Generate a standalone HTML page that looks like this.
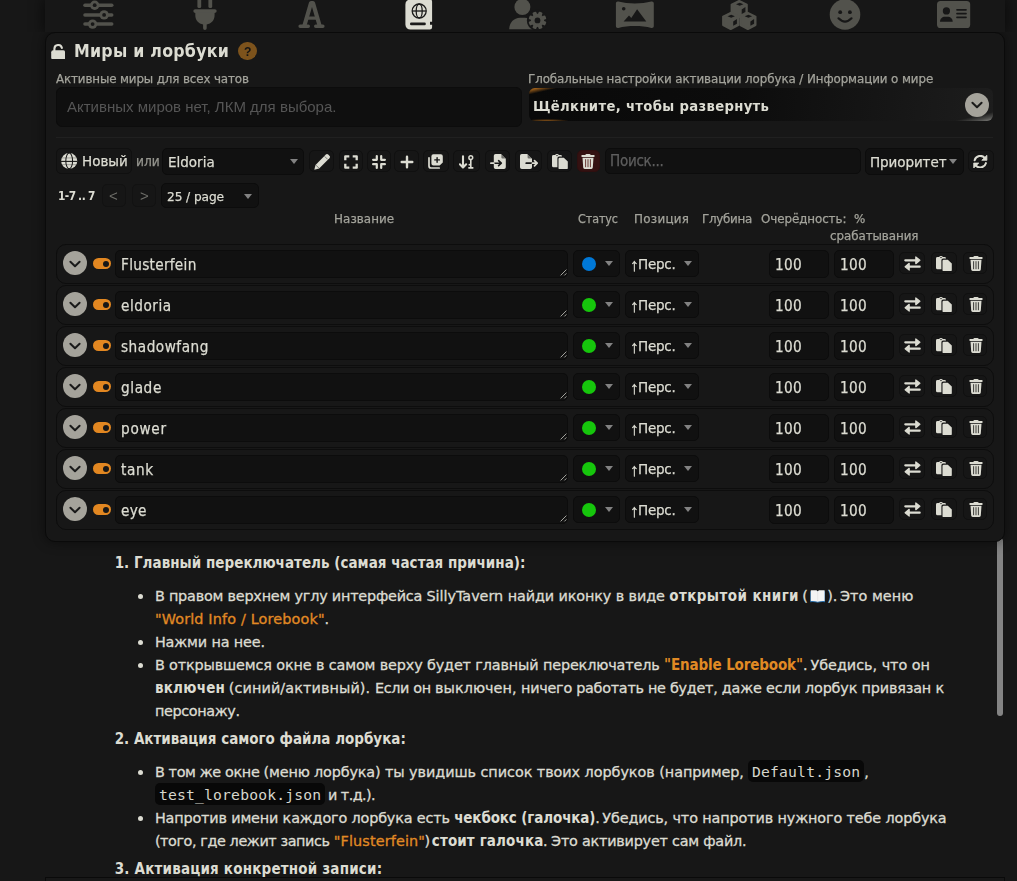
<!DOCTYPE html>
<html lang="ru">
<head>
<meta charset="utf-8">
<title>SillyTavern</title>
<style>
*{box-sizing:border-box;margin:0;padding:0}
html,body{width:1017px;height:881px;overflow:hidden;background:#171717}
body{position:relative;font-family:"DejaVu Sans","Liberation Sans",sans-serif;font-size:13.5px;color:#dcdcd2}
.abs{position:absolute}
#topbar{left:45px;top:0;width:960px;height:32px;background:#171717;box-shadow:0 0 14px 2px rgba(0,0,0,.55);clip-path:inset(-30px -30px 0 -30px)}
#panel{left:45px;top:32px;width:960px;height:510px;background:#171717;border:1px solid #0a0a0a;border-radius:10px;box-shadow:0 0 12px 1px rgba(0,0,0,.42);clip-path:inset(0 -30px -30px -30px)}
#chat{left:45px;top:542px;width:960px;height:335px;background:#171717}
#form{left:45px;top:877px;width:960px;height:10px;background:#181818;border:1px solid #0a0a0a}
.t{position:absolute;white-space:pre;line-height:20px;will-change:transform;-webkit-text-stroke:.25px currentColor}
.t.b{font-weight:700;-webkit-text-stroke:0}
.box{position:absolute;background:#111;border:1px solid #0c0c0c;border-radius:5px}
.btn{position:absolute;background:#161616;border:1px solid #101010;border-radius:5px}
.arrow{position:absolute;width:0;height:0;border-left:4px solid transparent;border-right:4px solid transparent;border-top:5px solid #828282}
.lbl{color:#a3a39b}
.row{position:absolute;left:56px;width:938px;height:40px;border:1px solid #0d0d0d;border-radius:10px;background:#171717}
.circ{position:absolute;width:24px;height:24px;border-radius:50%;background:#a5a39b}
.tog{position:absolute;width:18px;height:11px;border-radius:6px;background:#e28721}
.tog i{position:absolute;right:2px;top:2.5px;width:6px;height:6px;border-radius:50%;background:#171717}
.dot{position:absolute;width:14px;height:14px;border-radius:50%}
.chat{position:absolute;white-space:pre;line-height:23px;font-size:14.4px;color:#dcdcd2;-webkit-text-stroke:.3px currentColor}
.chat.b{font-family:"DejaVu Sans Condensed","DejaVu Sans",sans-serif;font-weight:700;font-size:15px;-webkit-text-stroke:0}
.chat.code{font-family:"DejaVu Sans Mono","Liberation Mono",monospace;font-size:14.7px;-webkit-text-stroke:0;color:#d6d6cc}
.chat.q{color:#e18a24}
.ln{position:static;height:0}
.bul{position:absolute;width:5.6px;height:5.6px;border-radius:50%;background:#dcdcd2}
#sb{left:996.5px;top:538px;width:6px;height:177.800px;background:#848484;border-radius:3px}
</style>
</head>
<body>
<div id="chat" class="abs"></div>
<div id="sb" class="abs"></div>
<div id="panel" class="abs"></div>
<div id="topbar" class="abs"></div>
<div id="form" class="abs"></div>
<div class="t b" id="s0" style="left:74.40px;top:41.35px;font-size:17.6px;letter-spacing:0.245px;font-family:'DejaVu Sans Condensed','DejaVu Sans',sans-serif;">Миры и лорбуки</div>
<div class="abs" style="left:237.9px;top:41.7px;width:18.9px;height:18.7px;border-radius:50%;background:#7d531c"></div>
<div class="t" id="s1" style="left:243.80px;top:42.35px;font-size:12.2px;letter-spacing:0.000px;color:#141414;font-family:'Liberation Sans',sans-serif;font-weight:700;-webkit-text-stroke:0;">?</div>
<div class="t lbl" id="s2" style="left:55.50px;top:69.35px;font-size:11.9px;letter-spacing:-0.137px;">Активные миры для всех чатов</div>
<div class="t lbl" id="s3" style="left:527.50px;top:69.35px;font-size:11.9px;letter-spacing:-0.098px;">Глобальные настройки активации лорбука / Информации о мире</div>
<div class="box" style="left:56px;top:87.3px;width:466px;height:39.3px;border-radius:6px;background:#0f0f0f"></div>
<div class="t" id="s4" style="left:66.80px;top:96.85px;font-size:15px;letter-spacing:0.000px;color:#555;font-family:'Liberation Sans',sans-serif;-webkit-text-stroke:0;">Активных миров нет, ЛКМ для выбора.</div>
<div class="abs" id="drawer" style="left:528.6px;top:87.8px;width:464.4px;height:33px;border-radius:6px;background:linear-gradient(167deg,rgba(226,135,33,.95) 0%,rgba(226,135,33,.55) 2%,rgba(226,135,33,0) 4.800%),linear-gradient(167deg,rgba(160,160,155,0) 93.5%,rgba(160,160,155,.35) 97%,rgba(165,165,160,.75) 100%),radial-gradient(ellipse 22px 2.2px at 18px 100%,rgba(226,135,33,.6),transparent 100%),linear-gradient(97deg,#090909 0%,#0c0c0c 45%,#1d1d1d 100%)"></div>
<div class="t b" id="s5" style="left:532.80px;top:95.85px;font-size:14.7px;letter-spacing:0.318px;font-family:'DejaVu Sans Condensed','DejaVu Sans',sans-serif;">Щёлкните, чтобы развернуть</div>
<div class="circ" style="left:965px;top:93px"></div>
<div class="abs" style="left:56px;top:136.5px;width:937px;height:1px;background:#202020"></div>
<div class="btn" style="left:56.4px;top:148.2px;width:76px;height:25.4px"></div>
<div class="t" id="s6" style="left:82.10px;top:151.35px;font-size:13.5px;letter-spacing:-0.003px;">Новый</div>
<div class="t" id="s7" style="left:136.40px;top:151.35px;font-size:13.6px;letter-spacing:-0.009px;color:#96968f;font-family:'DejaVu Sans Condensed','DejaVu Sans',sans-serif;">или</div>
<div class="box" style="left:162.2px;top:148.1px;width:142.3px;height:26.7px"></div>
<div class="t" id="s8" style="left:168.40px;top:152.35px;font-size:13.5px;letter-spacing:0.002px;">Eldoria</div>
<div class="arrow" style="left:290px;top:159px"></div>
<div class="btn" style="left:308.7px;top:150.3px;width:25.6px;height:22px"></div>
<div class="btn" style="left:338.5px;top:150.3px;width:24px;height:22px"></div>
<div class="btn" style="left:366.9px;top:150.3px;width:23.8px;height:22px"></div>
<div class="btn" style="left:394.4px;top:150.3px;width:24.2px;height:22px"></div>
<div class="btn" style="left:422.5px;top:150.3px;width:26px;height:22px"></div>
<div class="btn" style="left:452.7px;top:150.3px;width:27.6px;height:22px"></div>
<div class="btn" style="left:484.6px;top:150.3px;width:25.8px;height:22px"></div>
<div class="btn" style="left:514.7px;top:150.3px;width:27.6px;height:22px"></div>
<div class="btn" style="left:546.7px;top:150.3px;width:25.7px;height:22px"></div>
<div class="btn" style="left:576.5px;top:150.3px;width:23.8px;height:22px;background:#341111;border-color:#2e0f0f"></div>
<div class="box" style="left:604.5px;top:148px;width:256px;height:25.5px"></div>
<div class="t" id="s9" style="left:610.30px;top:151.35px;font-size:15px;letter-spacing:-0.244px;color:#5f5f5f;font-family:'DejaVu Sans Condensed','DejaVu Sans',sans-serif;">Поиск...</div>
<div class="box" style="left:864.5px;top:148px;width:99.5px;height:26.5px"></div>
<div class="t" id="s10" style="left:870.40px;top:152.35px;font-size:13.5px;letter-spacing:-0.080px;">Приоритет</div>
<div class="arrow" style="left:949.3px;top:159.3px"></div>
<div class="btn" style="left:967.6px;top:150.3px;width:26px;height:22px"></div>
<div class="ln"><span class="t b" id="s11" style="left:57.90px;top:186.35px;font-size:11.8px;letter-spacing:-0.544px;font-family:'DejaVu Sans Condensed','DejaVu Sans',sans-serif;">1-7</span> <span class="t b" id="s12" style="left:78.20px;top:186.35px;font-size:11.8px;letter-spacing:-0.278px;font-family:'DejaVu Sans Condensed','DejaVu Sans',sans-serif;">..</span> <span class="t b" id="s13" style="left:88.20px;top:186.35px;font-size:11.8px;letter-spacing:0.000px;font-family:'DejaVu Sans Condensed','DejaVu Sans',sans-serif;">7</span></div>
<div class="btn" style="left:101.5px;top:184.3px;width:24.9px;height:23px;border-color:#121212"></div>
<div class="t" id="s14" style="left:109.40px;top:185.85px;font-size:15px;letter-spacing:0.000px;color:#6e6e69;font-family:'Liberation Sans',sans-serif;-webkit-text-stroke:0;">&lt;</div>
<div class="btn" style="left:132.3px;top:184.3px;width:24.2px;height:23px;border-color:#121212"></div>
<div class="t" id="s15" style="left:139.90px;top:185.85px;font-size:15px;letter-spacing:0.000px;color:#6e6e69;font-family:'Liberation Sans',sans-serif;-webkit-text-stroke:0;">&gt;</div>
<div class="box" style="left:161.2px;top:183px;width:97.8px;height:25.4px"></div>
<div class="t" id="s16" style="left:167.00px;top:187.35px;font-size:12.2px;letter-spacing:-0.089px;">25 / page</div>
<div class="arrow" style="left:243.8px;top:193.5px"></div>
<div class="t lbl" id="s17" style="left:333.50px;top:209.35px;font-size:11.9px;letter-spacing:0.075px;">Название</div>
<div class="t lbl" id="s18" style="left:577.50px;top:208.85px;font-size:12.4px;letter-spacing:-0.066px;font-family:'DejaVu Sans Condensed','DejaVu Sans',sans-serif;">Статус</div>
<div class="t lbl" id="s19" style="left:633.50px;top:209.35px;font-size:11.9px;letter-spacing:0.292px;">Позиция</div>
<div class="t lbl" id="s20" style="left:702.20px;top:209.35px;font-size:11.9px;letter-spacing:-0.303px;">Глубина</div>
<div class="t lbl" id="s21" style="left:761.20px;top:209.35px;font-size:11.9px;letter-spacing:-0.083px;">Очерёдность:</div>
<div class="t lbl" id="s22" style="left:854.20px;top:209.35px;font-size:11.9px;letter-spacing:0.000px;">%</div>
<div class="t lbl" id="s23" style="left:830.20px;top:226.35px;font-size:11.9px;letter-spacing:-0.070px;">срабатывания</div>
<div class="row" style="top:244px"></div>
<div class="circ" style="left:63.4px;top:251.4px"></div>
<div class="tog" style="left:93px;top:258px"><i></i></div>
<div class="box" style="left:115px;top:250px;width:452.7px;height:27.5px"></div>
<div class="t" id="s24" style="left:120.90px;top:255.35px;font-size:15.2px;letter-spacing:0.280px;font-family:'DejaVu Sans Condensed','DejaVu Sans',sans-serif;">Flusterfein</div>
<svg class="abs" style="left:559.5px;top:269.4px" width="7" height="7" viewBox="0 0 7 7"><path d="M0.600 6.400L6.400 0.600M4.400 6.400L6.400 4.400" stroke="#b4b4ae" stroke-width="0.900" fill="none"/></svg>
<div class="box" style="left:573px;top:250px;width:47px;height:26.7px"></div>
<div class="dot" style="left:581.6px;top:256.8px;background:#0078d7"></div>
<div class="arrow" style="left:605px;top:261px"></div>
<div class="box" style="left:625px;top:250px;width:73.8px;height:26.7px"></div>
<div class="ln"><span class="t" id="s25" style="left:630.10px;top:255.35px;font-size:17.5px;letter-spacing:0.000px;font-family:'Liberation Sans',sans-serif;-webkit-text-stroke:.35px currentColor;">↑</span><span class="t" id="s26" style="left:638.20px;top:254.35px;font-size:13.5px;letter-spacing:-0.262px;">Перс.</span></div>
<div class="arrow" style="left:684px;top:261px"></div>
<div class="box" style="left:769px;top:250px;width:60px;height:27.5px"></div>
<div class="t" id="s27" style="left:774.70px;top:255.35px;font-size:15.2px;letter-spacing:0.261px;font-family:'DejaVu Sans Condensed','DejaVu Sans',sans-serif;">100</div>
<div class="box" style="left:834px;top:250px;width:60px;height:27.5px"></div>
<div class="t" id="s28" style="left:839.60px;top:255.35px;font-size:15.2px;letter-spacing:0.261px;font-family:'DejaVu Sans Condensed','DejaVu Sans',sans-serif;">100</div>
<div class="btn" style="left:899.3px;top:252.3px;width:25.8px;height:22.2px"></div>
<div class="btn" style="left:931.1px;top:252.3px;width:26.4px;height:22.2px"></div>
<div class="btn" style="left:963.1px;top:252.3px;width:24.3px;height:22.2px"></div>
<div class="row" style="top:285px"></div>
<div class="circ" style="left:63.4px;top:292.4px"></div>
<div class="tog" style="left:93px;top:299px"><i></i></div>
<div class="box" style="left:115px;top:291px;width:452.7px;height:27.5px"></div>
<div class="t" id="s29" style="left:120.90px;top:296.35px;font-size:15.2px;letter-spacing:0.511px;font-family:'DejaVu Sans Condensed','DejaVu Sans',sans-serif;">eldoria</div>
<svg class="abs" style="left:559.5px;top:310.4px" width="7" height="7" viewBox="0 0 7 7"><path d="M0.600 6.400L6.400 0.600M4.400 6.400L6.400 4.400" stroke="#b4b4ae" stroke-width="0.900" fill="none"/></svg>
<div class="box" style="left:573px;top:291px;width:47px;height:26.7px"></div>
<div class="dot" style="left:581.6px;top:297.8px;background:#16c60c"></div>
<div class="arrow" style="left:605px;top:302px"></div>
<div class="box" style="left:625px;top:291px;width:73.8px;height:26.7px"></div>
<div class="ln"><span class="t" id="s30" style="left:630.10px;top:296.35px;font-size:17.5px;letter-spacing:0.000px;font-family:'Liberation Sans',sans-serif;-webkit-text-stroke:.35px currentColor;">↑</span><span class="t" id="s31" style="left:638.20px;top:295.35px;font-size:13.5px;letter-spacing:-0.262px;">Перс.</span></div>
<div class="arrow" style="left:684px;top:302px"></div>
<div class="box" style="left:769px;top:291px;width:60px;height:27.5px"></div>
<div class="t" id="s32" style="left:774.70px;top:296.35px;font-size:15.2px;letter-spacing:0.261px;font-family:'DejaVu Sans Condensed','DejaVu Sans',sans-serif;">100</div>
<div class="box" style="left:834px;top:291px;width:60px;height:27.5px"></div>
<div class="t" id="s33" style="left:839.60px;top:296.35px;font-size:15.2px;letter-spacing:0.261px;font-family:'DejaVu Sans Condensed','DejaVu Sans',sans-serif;">100</div>
<div class="btn" style="left:899.3px;top:293.3px;width:25.8px;height:22.2px"></div>
<div class="btn" style="left:931.1px;top:293.3px;width:26.4px;height:22.2px"></div>
<div class="btn" style="left:963.1px;top:293.3px;width:24.3px;height:22.2px"></div>
<div class="row" style="top:326px"></div>
<div class="circ" style="left:63.4px;top:333.4px"></div>
<div class="tog" style="left:93px;top:340px"><i></i></div>
<div class="box" style="left:115px;top:332px;width:452.7px;height:27.5px"></div>
<div class="t" id="s34" style="left:120.90px;top:337.35px;font-size:15.2px;letter-spacing:0.501px;font-family:'DejaVu Sans Condensed','DejaVu Sans',sans-serif;">shadowfang</div>
<svg class="abs" style="left:559.5px;top:351.4px" width="7" height="7" viewBox="0 0 7 7"><path d="M0.600 6.400L6.400 0.600M4.400 6.400L6.400 4.400" stroke="#b4b4ae" stroke-width="0.900" fill="none"/></svg>
<div class="box" style="left:573px;top:332px;width:47px;height:26.7px"></div>
<div class="dot" style="left:581.6px;top:338.8px;background:#16c60c"></div>
<div class="arrow" style="left:605px;top:343px"></div>
<div class="box" style="left:625px;top:332px;width:73.8px;height:26.7px"></div>
<div class="ln"><span class="t" id="s35" style="left:630.10px;top:337.35px;font-size:17.5px;letter-spacing:0.000px;font-family:'Liberation Sans',sans-serif;-webkit-text-stroke:.35px currentColor;">↑</span><span class="t" id="s36" style="left:638.20px;top:336.35px;font-size:13.5px;letter-spacing:-0.262px;">Перс.</span></div>
<div class="arrow" style="left:684px;top:343px"></div>
<div class="box" style="left:769px;top:332px;width:60px;height:27.5px"></div>
<div class="t" id="s37" style="left:774.70px;top:337.35px;font-size:15.2px;letter-spacing:0.261px;font-family:'DejaVu Sans Condensed','DejaVu Sans',sans-serif;">100</div>
<div class="box" style="left:834px;top:332px;width:60px;height:27.5px"></div>
<div class="t" id="s38" style="left:839.60px;top:337.35px;font-size:15.2px;letter-spacing:0.261px;font-family:'DejaVu Sans Condensed','DejaVu Sans',sans-serif;">100</div>
<div class="btn" style="left:899.3px;top:334.3px;width:25.8px;height:22.2px"></div>
<div class="btn" style="left:931.1px;top:334.3px;width:26.4px;height:22.2px"></div>
<div class="btn" style="left:963.1px;top:334.3px;width:24.3px;height:22.2px"></div>
<div class="row" style="top:367px"></div>
<div class="circ" style="left:63.4px;top:374.4px"></div>
<div class="tog" style="left:93px;top:381px"><i></i></div>
<div class="box" style="left:115px;top:373px;width:452.7px;height:27.5px"></div>
<div class="t" id="s39" style="left:120.90px;top:378.35px;font-size:15.2px;letter-spacing:0.591px;font-family:'DejaVu Sans Condensed','DejaVu Sans',sans-serif;">glade</div>
<svg class="abs" style="left:559.5px;top:392.4px" width="7" height="7" viewBox="0 0 7 7"><path d="M0.600 6.400L6.400 0.600M4.400 6.400L6.400 4.400" stroke="#b4b4ae" stroke-width="0.900" fill="none"/></svg>
<div class="box" style="left:573px;top:373px;width:47px;height:26.7px"></div>
<div class="dot" style="left:581.6px;top:379.8px;background:#16c60c"></div>
<div class="arrow" style="left:605px;top:384px"></div>
<div class="box" style="left:625px;top:373px;width:73.8px;height:26.7px"></div>
<div class="ln"><span class="t" id="s40" style="left:630.10px;top:378.35px;font-size:17.5px;letter-spacing:0.000px;font-family:'Liberation Sans',sans-serif;-webkit-text-stroke:.35px currentColor;">↑</span><span class="t" id="s41" style="left:638.20px;top:377.35px;font-size:13.5px;letter-spacing:-0.262px;">Перс.</span></div>
<div class="arrow" style="left:684px;top:384px"></div>
<div class="box" style="left:769px;top:373px;width:60px;height:27.5px"></div>
<div class="t" id="s42" style="left:774.70px;top:378.35px;font-size:15.2px;letter-spacing:0.261px;font-family:'DejaVu Sans Condensed','DejaVu Sans',sans-serif;">100</div>
<div class="box" style="left:834px;top:373px;width:60px;height:27.5px"></div>
<div class="t" id="s43" style="left:839.60px;top:378.35px;font-size:15.2px;letter-spacing:0.261px;font-family:'DejaVu Sans Condensed','DejaVu Sans',sans-serif;">100</div>
<div class="btn" style="left:899.3px;top:375.3px;width:25.8px;height:22.2px"></div>
<div class="btn" style="left:931.1px;top:375.3px;width:26.4px;height:22.2px"></div>
<div class="btn" style="left:963.1px;top:375.3px;width:24.3px;height:22.2px"></div>
<div class="row" style="top:408px"></div>
<div class="circ" style="left:63.4px;top:415.4px"></div>
<div class="tog" style="left:93px;top:422px"><i></i></div>
<div class="box" style="left:115px;top:414px;width:452.7px;height:27.5px"></div>
<div class="t" id="s44" style="left:120.90px;top:419.35px;font-size:15.2px;letter-spacing:0.716px;font-family:'DejaVu Sans Condensed','DejaVu Sans',sans-serif;">power</div>
<svg class="abs" style="left:559.5px;top:433.4px" width="7" height="7" viewBox="0 0 7 7"><path d="M0.600 6.400L6.400 0.600M4.400 6.400L6.400 4.400" stroke="#b4b4ae" stroke-width="0.900" fill="none"/></svg>
<div class="box" style="left:573px;top:414px;width:47px;height:26.7px"></div>
<div class="dot" style="left:581.6px;top:420.8px;background:#16c60c"></div>
<div class="arrow" style="left:605px;top:425px"></div>
<div class="box" style="left:625px;top:414px;width:73.8px;height:26.7px"></div>
<div class="ln"><span class="t" id="s45" style="left:630.10px;top:419.35px;font-size:17.5px;letter-spacing:0.000px;font-family:'Liberation Sans',sans-serif;-webkit-text-stroke:.35px currentColor;">↑</span><span class="t" id="s46" style="left:638.20px;top:418.35px;font-size:13.5px;letter-spacing:-0.262px;">Перс.</span></div>
<div class="arrow" style="left:684px;top:425px"></div>
<div class="box" style="left:769px;top:414px;width:60px;height:27.5px"></div>
<div class="t" id="s47" style="left:774.70px;top:419.35px;font-size:15.2px;letter-spacing:0.261px;font-family:'DejaVu Sans Condensed','DejaVu Sans',sans-serif;">100</div>
<div class="box" style="left:834px;top:414px;width:60px;height:27.5px"></div>
<div class="t" id="s48" style="left:839.60px;top:419.35px;font-size:15.2px;letter-spacing:0.261px;font-family:'DejaVu Sans Condensed','DejaVu Sans',sans-serif;">100</div>
<div class="btn" style="left:899.3px;top:416.3px;width:25.8px;height:22.2px"></div>
<div class="btn" style="left:931.1px;top:416.3px;width:26.4px;height:22.2px"></div>
<div class="btn" style="left:963.1px;top:416.3px;width:24.3px;height:22.2px"></div>
<div class="row" style="top:449px"></div>
<div class="circ" style="left:63.4px;top:456.4px"></div>
<div class="tog" style="left:93px;top:463px"><i></i></div>
<div class="box" style="left:115px;top:455px;width:452.7px;height:27.5px"></div>
<div class="t" id="s49" style="left:120.90px;top:460.35px;font-size:15.2px;letter-spacing:0.662px;font-family:'DejaVu Sans Condensed','DejaVu Sans',sans-serif;">tank</div>
<svg class="abs" style="left:559.5px;top:474.4px" width="7" height="7" viewBox="0 0 7 7"><path d="M0.600 6.400L6.400 0.600M4.400 6.400L6.400 4.400" stroke="#b4b4ae" stroke-width="0.900" fill="none"/></svg>
<div class="box" style="left:573px;top:455px;width:47px;height:26.7px"></div>
<div class="dot" style="left:581.6px;top:461.8px;background:#16c60c"></div>
<div class="arrow" style="left:605px;top:466px"></div>
<div class="box" style="left:625px;top:455px;width:73.8px;height:26.7px"></div>
<div class="ln"><span class="t" id="s50" style="left:630.10px;top:460.35px;font-size:17.5px;letter-spacing:0.000px;font-family:'Liberation Sans',sans-serif;-webkit-text-stroke:.35px currentColor;">↑</span><span class="t" id="s51" style="left:638.20px;top:459.35px;font-size:13.5px;letter-spacing:-0.262px;">Перс.</span></div>
<div class="arrow" style="left:684px;top:466px"></div>
<div class="box" style="left:769px;top:455px;width:60px;height:27.5px"></div>
<div class="t" id="s52" style="left:774.70px;top:460.35px;font-size:15.2px;letter-spacing:0.261px;font-family:'DejaVu Sans Condensed','DejaVu Sans',sans-serif;">100</div>
<div class="box" style="left:834px;top:455px;width:60px;height:27.5px"></div>
<div class="t" id="s53" style="left:839.60px;top:460.35px;font-size:15.2px;letter-spacing:0.261px;font-family:'DejaVu Sans Condensed','DejaVu Sans',sans-serif;">100</div>
<div class="btn" style="left:899.3px;top:457.3px;width:25.8px;height:22.2px"></div>
<div class="btn" style="left:931.1px;top:457.3px;width:26.4px;height:22.2px"></div>
<div class="btn" style="left:963.1px;top:457.3px;width:24.3px;height:22.2px"></div>
<div class="row" style="top:490px"></div>
<div class="circ" style="left:63.4px;top:497.4px"></div>
<div class="tog" style="left:93px;top:504px"><i></i></div>
<div class="box" style="left:115px;top:496px;width:452.7px;height:27.5px"></div>
<div class="t" id="s54" style="left:120.90px;top:501.35px;font-size:15.2px;letter-spacing:0.247px;font-family:'DejaVu Sans Condensed','DejaVu Sans',sans-serif;">eye</div>
<svg class="abs" style="left:559.5px;top:515.4px" width="7" height="7" viewBox="0 0 7 7"><path d="M0.600 6.400L6.400 0.600M4.400 6.400L6.400 4.400" stroke="#b4b4ae" stroke-width="0.900" fill="none"/></svg>
<div class="box" style="left:573px;top:496px;width:47px;height:26.7px"></div>
<div class="dot" style="left:581.6px;top:502.8px;background:#16c60c"></div>
<div class="arrow" style="left:605px;top:507px"></div>
<div class="box" style="left:625px;top:496px;width:73.8px;height:26.7px"></div>
<div class="ln"><span class="t" id="s55" style="left:630.10px;top:501.35px;font-size:17.5px;letter-spacing:0.000px;font-family:'Liberation Sans',sans-serif;-webkit-text-stroke:.35px currentColor;">↑</span><span class="t" id="s56" style="left:638.20px;top:500.35px;font-size:13.5px;letter-spacing:-0.262px;">Перс.</span></div>
<div class="arrow" style="left:684px;top:507px"></div>
<div class="box" style="left:769px;top:496px;width:60px;height:27.5px"></div>
<div class="t" id="s57" style="left:774.70px;top:501.35px;font-size:15.2px;letter-spacing:0.261px;font-family:'DejaVu Sans Condensed','DejaVu Sans',sans-serif;">100</div>
<div class="box" style="left:834px;top:496px;width:60px;height:27.5px"></div>
<div class="t" id="s58" style="left:839.60px;top:501.35px;font-size:15.2px;letter-spacing:0.261px;font-family:'DejaVu Sans Condensed','DejaVu Sans',sans-serif;">100</div>
<div class="btn" style="left:899.3px;top:498.3px;width:25.8px;height:22.2px"></div>
<div class="btn" style="left:931.1px;top:498.3px;width:26.4px;height:22.2px"></div>
<div class="btn" style="left:963.1px;top:498.3px;width:24.3px;height:22.2px"></div>
<div class="ln"><span class="chat b" id="s59" style="left:114.70px;top:551.85px;letter-spacing:0.025px">1. Главный переключатель (самая частая причина):</span></div>
<div class="bul" style="left:137.6px;top:593.90px"></div>
<div class="ln"><span class="chat" id="s60" style="left:154.90px;top:584.85px;letter-spacing:-0.210px">В правом верхнем углу интерфейса </span><span class="chat" id="s61" style="left:426.50px;top:584.85px;letter-spacing:-0.034px">SillyTavern </span><span class="chat" id="s62" style="left:507.70px;top:584.85px;letter-spacing:-0.113px">найди иконку в виде </span><span class="chat b" id="s63" style="left:669.20px;top:584.85px;letter-spacing:0.429px">открытой книги</span> <span class="chat" id="s64" style="left:802.30px;top:584.85px;letter-spacing:0.000px">(</span><svg class="abs" style="left:809.70px;top:590.10px" width="15.4" height="12.8" viewBox="0 0 15.4 12.8" preserveAspectRatio="none"><path fill="#2a6da6" d="M0.200 1.300H15.200V12.200Q11 11.700 7.700 12.800Q4.400 11.700 0.200 12.200Z"/><path fill="#f4f4f4" d="M0.800 0.300H6.500L7.700 1.500L8.900 0.300H14.600V11Q11 10.600 7.700 11.700Q4.400 10.600 0.800 11Z"/><path d="M7.700 1.500V11.600" stroke="#dadada" stroke-width="0.500"/></svg><span class="chat" id="s65" style="left:827.20px;top:584.85px;letter-spacing:0.000px">).</span> <span class="chat" id="s66" style="left:839.90px;top:584.85px;letter-spacing:0.050px">Это меню</span> <span class="chat q" id="s67" style="left:154.90px;top:607.85px;letter-spacing:0.150px">"World Info / Lorebook"</span><span class="chat" id="s68" style="left:324.40px;top:607.85px;letter-spacing:0.000px">.</span></div>
<div class="bul" style="left:137.6px;top:639.90px"></div>
<div class="ln"><span class="chat" id="s69" style="left:154.90px;top:630.85px;letter-spacing:-0.141px">Нажми на нее.</span></div>
<div class="bul" style="left:137.6px;top:662.90px"></div>
<div class="ln"><span class="chat" id="s70" style="left:154.90px;top:653.85px;letter-spacing:-0.138px">В открывшемся окне в самом верху будет главный переключатель </span><span class="chat b q" id="s71" style="left:664.10px;top:653.85px;letter-spacing:-0.131px">"Enable Lorebook"</span><span class="chat" id="s72" style="left:802.90px;top:653.85px;letter-spacing:0.000px">.</span> <span class="chat" id="s73" style="left:810.50px;top:653.85px;letter-spacing:-0.023px">Убедись, что он</span> <span class="chat b" id="s74" style="left:154.90px;top:676.85px;letter-spacing:0.258px">включен</span> <span class="chat" id="s75" style="left:228.80px;top:676.85px;letter-spacing:0.091px">(синий/активный). </span><span class="chat" id="s76" style="left:374.90px;top:676.85px;letter-spacing:-0.340px">Если он </span><span class="chat" id="s77" style="left:435.10px;top:676.85px;letter-spacing:0.023px">выключен, </span><span class="chat" id="s78" style="left:521.10px;top:676.85px;letter-spacing:-0.277px">ничего работать не будет, </span><span class="chat" id="s79" style="left:721.80px;top:676.85px;letter-spacing:-0.182px">даже если лорбук привязан к</span> <span class="chat" id="s80" style="left:154.90px;top:699.85px;letter-spacing:-0.367px">персонажу.</span></div>
<div class="ln"><span class="chat b" id="s81" style="left:114.70px;top:727.85px;letter-spacing:-0.007px">2. Активация самого файла лорбука:</span></div>
<div class="bul" style="left:137.6px;top:769.70px"></div>
<div class="ln"><span class="chat" id="s82" style="left:154.90px;top:760.85px;letter-spacing:-0.364px">В том же окне </span><span class="chat" id="s83" style="left:263.60px;top:760.85px;letter-spacing:-0.157px">(меню лорбука) </span><span class="chat" id="s84" style="left:384.90px;top:760.85px;letter-spacing:-0.052px">ты увидишь список твоих лорбуков (например,</span> <span class="abs" style="left:748.2px;top:760.2px;width:115.39999999999998px;height:21.59999999999991px;background:#080808;border-radius:5px"></span><code class="chat code" id="s85" style="left:751.90px;top:760.35px;letter-spacing:0.198px">Default.json</code><span class="chat" id="s86" style="left:864.30px;top:760.85px;letter-spacing:0.000px">,</span> <span class="abs" style="left:155.2px;top:783.4px;width:169.40000000000003px;height:21.600000000000023px;background:#080808;border-radius:5px"></span><code class="chat code" id="s87" style="left:158.90px;top:783.35px;letter-spacing:0.184px">test_lorebook.json</code> <span class="chat" id="s88" style="left:328.10px;top:783.85px;letter-spacing:-0.573px">и т.д.).</span></div>
<div class="bul" style="left:137.6px;top:815.70px"></div>
<div class="ln"><span class="chat" id="s89" style="left:154.90px;top:806.85px;letter-spacing:-0.163px">Напротив имени каждого лорбука есть </span><span class="chat b" id="s90" style="left:454.20px;top:806.85px;letter-spacing:-0.127px">чекбокс (галочка)</span><span class="chat" id="s91" style="left:595.30px;top:806.85px;letter-spacing:0.000px">.</span> <span class="chat" id="s92" style="left:602.30px;top:806.85px;letter-spacing:-0.127px">Убедись, что напротив нужного тебе лорбука</span> <span class="chat" id="s93" style="left:154.90px;top:829.85px;letter-spacing:-0.412px">(того, где лежит запись </span><span class="chat q" id="s94" style="left:333.80px;top:829.85px;letter-spacing:0.126px">"Flusterfein"</span><span class="chat" id="s95" style="left:424.40px;top:829.85px;letter-spacing:0.000px">)</span> <span class="chat b" id="s96" style="left:431.80px;top:829.85px;letter-spacing:0.132px">стоит галочка</span><span class="chat" id="s97" style="left:543.10px;top:829.85px;letter-spacing:0.000px">.</span> <span class="chat" id="s98" style="left:551.10px;top:829.85px;letter-spacing:-0.229px">Это активирует сам файл.</span></div>
<div class="ln"><span class="chat b" id="s99" style="left:114.70px;top:857.85px;letter-spacing:0.198px">3. Активация конкретной записи:</span></div>
<svg class="abs" style="left:0;top:0" width="1017" height="33" viewBox="0 0 1017 33"><g fill="#52524c"><rect x="83.200" y="3.45" width="30.3" height="3.5" rx="1.75"/><circle cx="94.7" cy="5.2" r="4.7"/><rect x="83.200" y="13.15" width="30.3" height="3.5" rx="1.75"/><circle cx="104.1" cy="14.9" r="4.7"/><rect x="83.200" y="22.35" width="30.3" height="3.5" rx="1.75"/><circle cx="92.6" cy="24.1" r="4.7"/></g><circle cx="94.7" cy="5.2" r="1.9" fill="#171717"/><circle cx="104.1" cy="14.9" r="1.9" fill="#171717"/><circle cx="92.6" cy="24.1" r="1.9" fill="#171717"/><g fill="#52524c"><rect x="197.400" y="-3" width="3.8" height="11" rx="1.6"/><rect x="208.400" y="-3" width="3.8" height="11" rx="1.6"/><rect x="193.300" y="9.300" width="23.4" height="3.6" rx="1.8"/><path d="M195.300 12.800H214.600V15.300C214.600 20.300 211.200 23.800 206.700 24.500V28.200a1.800 1.800 0 0 1-3.600 0V24.500C198.700 23.800 195.300 20.300 195.300 15.300Z"/></g><g fill="none" stroke="#52524c" stroke-linejoin="round"><path d="M304.300 26L311 3H313L319.700 26" stroke-width="4.2"/><path d="M307 18.100H317" stroke-width="3.2"/><path d="M300.100 26.200H308.300M315.700 26.200H322.900" stroke-width="3.4" stroke-linecap="round"/></g><path fill="#dcdcd2" d="M410.400 -0.600H429.800a2.300 2.300 0 0 1 2.300 2.300V21.800H430V24.800H432.100V27.300a2.300 2.300 0 0 1-2.300 2.300H410.400a5 5 0 0 1-5-5V4.400a5 5 0 0 1 5-5Z"/><rect x="410" y="22.500" width="15.8" height="2.700" rx="1.300" fill="#1a1a1a"/><g fill="none" stroke="#1a1a1a" stroke-width="1.300"><circle cx="419.200" cy="11" r="7"/><ellipse cx="419.200" cy="11" rx="3" ry="7"/><path d="M412.200 11H426.200"/></g><g fill="#52524c"><circle cx="522.400" cy="7" r="8"/><path d="M509.200 29.300c0-6.600 4.600-11.600 10.800-11.600h4.800c6.200 0 10.800 5 10.800 11.600z"/></g><circle cx="537.500" cy="20.400" r="10.600" fill="#171717"/><g fill="#52524c"><circle cx="537.500" cy="20.400" r="6.600"/><rect x="535.500" y="11.500" width="4" height="5" rx="1" transform="rotate(22.5 537.500 20.400)"/><rect x="535.500" y="11.500" width="4" height="5" rx="1" transform="rotate(67.5 537.500 20.400)"/><rect x="535.500" y="11.500" width="4" height="5" rx="1" transform="rotate(112.5 537.500 20.400)"/><rect x="535.500" y="11.500" width="4" height="5" rx="1" transform="rotate(157.5 537.500 20.400)"/><rect x="535.500" y="11.500" width="4" height="5" rx="1" transform="rotate(202.5 537.500 20.400)"/><rect x="535.500" y="11.500" width="4" height="5" rx="1" transform="rotate(247.5 537.500 20.400)"/><rect x="535.500" y="11.500" width="4" height="5" rx="1" transform="rotate(292.5 537.500 20.400)"/><rect x="535.500" y="11.500" width="4" height="5" rx="1" transform="rotate(337.5 537.500 20.400)"/></g><circle cx="537.500" cy="20.400" r="2.900" fill="#171717"/><path fill="#52524c" d="M615.900 3.400C615.900 2 617 1.100 618.400 1.500C628 4.100 641.700 4.100 651.300 1.500C652.700 1.100 653.800 2 653.800 3.400V26.100C653.800 27.500 652.700 28.400 651.300 28C641.700 25.400 628 25.400 618.400 28C617 28.400 615.900 27.500 615.900 26.100Z"/><path fill="#171717" d="M623.600 21.600L629 15.400L631.300 17.900L637.100 9.200L646.300 21.600Z"/><circle cx="623.700" cy="8.800" r="1.800" fill="#171717"/><path fill="#52524c" stroke="#52524c" stroke-width="2" stroke-linejoin="round" d="M739.2 0.90L746.80 4.70V13.10L739.2 17.10L731.60 13.10V4.70Z"/><path fill="#52524c" stroke="#52524c" stroke-width="2" stroke-linejoin="round" d="M730.7 12.80L738.30 16.60V25.00L730.7 29.00L723.10 25.00V16.60Z"/><path fill="#52524c" stroke="#52524c" stroke-width="2" stroke-linejoin="round" d="M747.9 12.80L755.50 16.60V25.00L747.9 29.00L740.30 25.00V16.60Z"/><path fill="#171717" d="M739.70 2.80L743.40 4.30L739.70 5.80L736.00 4.30Z M741.70 9.50L745.40 7.00V11.90L741.70 13.90Z"/><path fill="#171717" d="M731.20 14.70L734.90 16.20L731.20 17.70L727.50 16.20Z M733.20 21.40L736.90 18.90V23.80L733.20 25.80Z"/><path fill="#171717" d="M748.40 14.70L752.10 16.20L748.40 17.70L744.70 16.20Z M750.40 21.40L754.10 18.90V23.80L750.40 25.80Z"/><circle cx="845" cy="14.500" r="15.300" fill="#52524c"/><circle cx="840.200" cy="12.200" r="1.900" fill="#171717"/><circle cx="849.900" cy="12.200" r="1.900" fill="#171717"/><path d="M838.500 18.300Q845 25 851.500 18.300" fill="none" stroke="#171717" stroke-width="2.200" stroke-linecap="round"/><rect x="937" y="1" width="33.2" height="27" rx="3.600" fill="#52524c"/><circle cx="946.400" cy="10.900" r="3.600" fill="#171717"/><path fill="#171717" d="M940 21.800c0-3 2.200-5 5-5h2.700c2.800 0 5 2 5 5z"/><path d="M957 9.800H966M957 13.600H966M957 17.300H966" stroke="#171717" stroke-width="1.700" stroke-linecap="round"/></svg>
<svg class="abs" style="left:50.60px;top:43.50px" width="14.4" height="15.6" viewBox="0 0 14.4 15.6" preserveAspectRatio="none"><rect x="0.200" y="6.300" width="14" height="9.300" rx="2" fill="#dcdcd2"/><path d="M3.400 6.500V4.700A3.800 3.800 0 0 1 10.900 4" fill="none" stroke="#dcdcd2" stroke-width="2.100" stroke-linecap="round"/></svg>
<svg class="abs" style="left:61.20px;top:153.40px" width="16.4" height="15.8" viewBox="0 0 16 16" preserveAspectRatio="none"><circle cx="8" cy="8" r="7.900" fill="#dcdcd2"/><g fill="none" stroke="#151515"><ellipse cx="8" cy="8" rx="3.300" ry="7.900" stroke-width="1"/><path d="M0 8.500H16" stroke-width="1.100"/><path d="M0.800 5H15.200M0.800 11.800H15.200" stroke-width="0.700" opacity=".45"/></g></svg>
<svg class="abs" style="left:313.50px;top:153.50px" width="16" height="16" viewBox="0 0 16 16" preserveAspectRatio="none"><path fill="#dcdcd2" d="M0.300 15.700L1.500 10.900L10.900 1.500L11.800 0.600a1.700 1.700 0 0 1 2.400 0L15.400 1.800a1.700 1.700 0 0 1 0 2.400L5.100 14.500Z"/><path d="M2 11.200L4.800 14M10.700 2.400L13.600 5.300" stroke="#161616" stroke-width="0.700" opacity=".7"/></svg>
<svg class="abs" style="left:343.50px;top:154.50px" width="14" height="14" viewBox="0 0 14 14" preserveAspectRatio="none"><path fill="none" stroke="#dcdcd2" stroke-width="2.300" stroke-linecap="butt" stroke-linejoin="round" d="M1.300 5.300V1.300H5.300M8.700 1.300H12.700V5.300M12.700 8.700V12.700H8.700M5.300 12.700H1.300V8.700"/></svg>
<svg class="abs" style="left:371.80px;top:154.50px" width="14" height="14" viewBox="0 0 14 14" preserveAspectRatio="none"><path fill="none" stroke="#dcdcd2" stroke-width="2.200" stroke-linecap="round" stroke-linejoin="round" d="M4.800 1.100V4.800H1.100M9.200 1.100V4.800H12.900M12.900 9.200H9.200V12.900M1.100 9.200H4.800V12.900"/></svg>
<svg class="abs" style="left:399.50px;top:154.50px" width="14" height="14" viewBox="0 0 14 14" preserveAspectRatio="none"><path fill="none" stroke="#dcdcd2" stroke-width="2.400" stroke-linecap="round" d="M7 1.700V12.300M1.700 7H12.300"/></svg>
<svg class="abs" style="left:428.00px;top:154.00px" width="15" height="15" viewBox="0 0 15 15" preserveAspectRatio="none"><path fill="#dcdcd2" d="M5.400 0.200H12.800a2 2 0 0 1 2 2V8.400L11.600 11.600H5.400a2 2 0 0 1-2-2V2.200a2 2 0 0 1 2-2Z"/><path d="M9.100 3.600V8.200M6.800 5.900H11.400" stroke="#151515" stroke-width="1.400" stroke-linecap="round"/><path d="M1 3.800V12a2 2 0 0 0 2 2H11.200" fill="none" stroke="#dcdcd2" stroke-width="1.700" stroke-linecap="round"/></svg>
<svg class="abs" style="left:459.00px;top:154.50px" width="15" height="14" viewBox="0 0 15 14" preserveAspectRatio="none"><g fill="none" stroke="#dcdcd2" stroke-linecap="round" stroke-linejoin="round"><path d="M4 1.200V12.400M0.900 9.300L4 12.600L7.100 9.300" stroke-width="2.100"/><circle cx="11.800" cy="2.700" r="1.900" stroke-width="1.500"/><path d="M11.800 4.800V12.400M10.300 9.700L11.800 9.300M9.900 12.900H13.800" stroke-width="1.600"/></g></svg>
<svg class="abs" style="left:489.90px;top:154.00px" width="16" height="15" viewBox="0 0 16 15" preserveAspectRatio="none"><path fill="#dcdcd2" d="M3.800 1.800A1.800 1.800 0 0 1 5.600 0H11L15.800 4.800V13.200A1.800 1.800 0 0 1 14 15H5.600A1.800 1.800 0 0 1 3.800 13.200Z"/><path fill="#161616" opacity=".55" d="M11.400 0.400L15.400 4.400H12.400a1 1 0 0 1-1-1Z"/><path d="M3.800 9.200H10.800M8.600 6.700L11.300 9.200L8.600 11.700" fill="none" stroke="#161616" stroke-width="1.600" stroke-linecap="round" stroke-linejoin="round"/><path d="M0.900 9.200H3.800" stroke="#dcdcd2" stroke-width="1.700" stroke-linecap="round"/></svg>
<svg class="abs" style="left:519.70px;top:154.00px" width="18" height="15" viewBox="0 0 18 15" preserveAspectRatio="none"><path fill="#dcdcd2" d="M0 1.800A1.800 1.800 0 0 1 1.800 0H7.200L12 4.800V13.200A1.800 1.800 0 0 1 10.200 15H1.800A1.800 1.800 0 0 1 0 13.200Z"/><path fill="#161616" opacity=".55" d="M7.600 0.400L11.600 4.400H8.600a1 1 0 0 1-1-1Z"/><path d="M6.200 9.200H12.300" fill="none" stroke="#161616" stroke-width="1.700" stroke-linecap="round"/><path d="M12.400 9.200H16.600M14.500 6.600L17.200 9.200L14.500 11.800" fill="none" stroke="#dcdcd2" stroke-width="1.700" stroke-linecap="round" stroke-linejoin="round"/></svg>
<svg class="abs" style="left:551.55px;top:153.90px" width="16" height="15.2" viewBox="0 0 16 15.2" preserveAspectRatio="none"><path fill="#dcdcd2" d="M1.500 0.900H3.300a1.800 1.500 0 0 1 3.400 0H8.500A1.500 1.500 0 0 1 10 2.400V11.700A1.500 1.500 0 0 1 8.500 13.200H1.500A1.500 1.500 0 0 1 0 11.700V2.400A1.500 1.500 0 0 1 1.500 0.900Z"/><circle cx="5" cy="1.500" r="0.700" fill="#161616"/><path fill="#161616" d="M5.400 4.300A1.700 1.700 0 0 1 7.100 2.600H12.300L16 6.200V15.200H5.400Z"/><path fill="#dcdcd2" d="M6.500 5A1.300 1.300 0 0 1 7.800 3.700H11.800L15.800 7.500V13.900A1.300 1.300 0 0 1 14.500 15.200H7.800A1.300 1.300 0 0 1 6.500 13.900Z"/></svg>
<svg class="abs" style="left:581.40px;top:154.10px" width="14" height="15" viewBox="0 0 14 15" preserveAspectRatio="none"><path fill="#dcdcd2" d="M4.600 0.500A1 1 0 0 1 5.500 0H8.500A1 1 0 0 1 9.400 0.500L9.800 1.100H12.800a0.900 0.900 0 0 1 0 1.800H1.200a0.900 0.900 0 0 1 0-1.800H4.200Z M1.500 3.800H12.500L11.800 13.600A1.500 1.500 0 0 1 10.300 15H3.700A1.500 1.500 0 0 1 2.200 13.600Z"/><path d="M4.600 5.600V12.800M7 5.600V12.800M9.400 5.600V12.800" stroke="#6a3a36" stroke-width="1" stroke-linecap="round"/></svg>
<svg class="abs" style="left:973.10px;top:154.80px" width="14.6" height="13.4" viewBox="0 0 15 14" preserveAspectRatio="none"><g fill="none" stroke="#dcdcd2" stroke-width="2.100" stroke-linecap="round"><path d="M1.700 5.500A6 6 0 0 1 12.200 3.200"/><path d="M13.300 8.500A6 6 0 0 1 2.800 10.800"/></g><path fill="#dcdcd2" d="M14.300 0.300V5.600H9Z M0.700 13.700V8.400H6Z" stroke="#dcdcd2" stroke-width="0.800" stroke-linejoin="round"/></svg>
<svg class="abs" style="left:970.00px;top:100.20px" width="14" height="10" viewBox="0 0 14 10" preserveAspectRatio="none"><path d="M2.400 2.800L7 7.300L11.600 2.800" fill="none" stroke="#1a1a1a" stroke-width="2" stroke-linecap="round" stroke-linejoin="round"/></svg>
<svg class="abs" style="left:68.40px;top:258.70px" width="14" height="10" viewBox="0 0 14 10" preserveAspectRatio="none"><path d="M2.400 2.800L7 7.300L11.600 2.800" fill="none" stroke="#1a1a1a" stroke-width="2" stroke-linecap="round" stroke-linejoin="round"/></svg>
<svg class="abs" style="left:904.00px;top:256.00px" width="17" height="15" viewBox="0 0 17 15" preserveAspectRatio="none"><g fill="#dcdcd2" stroke="#dcdcd2" stroke-linejoin="round" stroke-linecap="round"><path d="M1.300 4.300H12" stroke-width="2.200" fill="none"/><path d="M11.800 0.900L15.900 4.300L11.800 7.700Z" stroke-width="1.200"/><path d="M15.700 10.700H5" stroke-width="2.200" fill="none"/><path d="M5.200 7.300L1.100 10.700L5.200 14.100Z" stroke-width="1.200"/></g></svg>
<svg class="abs" style="left:936.40px;top:255.80px" width="16" height="15.2" viewBox="0 0 16 15.2" preserveAspectRatio="none"><path fill="#dcdcd2" d="M1.500 0.900H3.300a1.800 1.500 0 0 1 3.400 0H8.500A1.500 1.500 0 0 1 10 2.400V11.700A1.500 1.500 0 0 1 8.500 13.200H1.500A1.500 1.500 0 0 1 0 11.700V2.400A1.500 1.500 0 0 1 1.500 0.900Z"/><circle cx="5" cy="1.500" r="0.700" fill="#161616"/><path fill="#161616" d="M5.400 4.300A1.700 1.700 0 0 1 7.100 2.600H12.300L16 6.200V15.200H5.400Z"/><path fill="#dcdcd2" d="M6.500 5A1.300 1.300 0 0 1 7.800 3.700H11.800L15.800 7.500V13.900A1.300 1.300 0 0 1 14.500 15.200H7.800A1.300 1.300 0 0 1 6.500 13.900Z"/></svg>
<svg class="abs" style="left:968.60px;top:255.90px" width="14" height="15" viewBox="0 0 14 15" preserveAspectRatio="none"><path fill="#dcdcd2" d="M4.600 0.500A1 1 0 0 1 5.500 0H8.500A1 1 0 0 1 9.400 0.500L9.800 1.100H12.800a0.900 0.900 0 0 1 0 1.800H1.200a0.900 0.900 0 0 1 0-1.800H4.200Z M1.500 3.800H12.500L11.800 13.600A1.500 1.500 0 0 1 10.300 15H3.700A1.500 1.500 0 0 1 2.200 13.600Z"/><path d="M4.600 5.600V12.800M7 5.600V12.800M9.400 5.600V12.800" stroke="#3c3c39" stroke-width="1" stroke-linecap="round"/></svg>
<svg class="abs" style="left:68.40px;top:299.70px" width="14" height="10" viewBox="0 0 14 10" preserveAspectRatio="none"><path d="M2.400 2.800L7 7.300L11.600 2.800" fill="none" stroke="#1a1a1a" stroke-width="2" stroke-linecap="round" stroke-linejoin="round"/></svg>
<svg class="abs" style="left:904.00px;top:297.00px" width="17" height="15" viewBox="0 0 17 15" preserveAspectRatio="none"><g fill="#dcdcd2" stroke="#dcdcd2" stroke-linejoin="round" stroke-linecap="round"><path d="M1.300 4.300H12" stroke-width="2.200" fill="none"/><path d="M11.800 0.900L15.900 4.300L11.800 7.700Z" stroke-width="1.200"/><path d="M15.700 10.700H5" stroke-width="2.200" fill="none"/><path d="M5.200 7.300L1.100 10.700L5.200 14.100Z" stroke-width="1.200"/></g></svg>
<svg class="abs" style="left:936.40px;top:296.80px" width="16" height="15.2" viewBox="0 0 16 15.2" preserveAspectRatio="none"><path fill="#dcdcd2" d="M1.500 0.900H3.300a1.800 1.500 0 0 1 3.400 0H8.500A1.500 1.500 0 0 1 10 2.400V11.700A1.500 1.500 0 0 1 8.500 13.200H1.500A1.500 1.500 0 0 1 0 11.700V2.400A1.500 1.500 0 0 1 1.500 0.900Z"/><circle cx="5" cy="1.500" r="0.700" fill="#161616"/><path fill="#161616" d="M5.400 4.300A1.700 1.700 0 0 1 7.100 2.600H12.300L16 6.200V15.200H5.400Z"/><path fill="#dcdcd2" d="M6.500 5A1.300 1.300 0 0 1 7.800 3.700H11.800L15.800 7.500V13.900A1.300 1.300 0 0 1 14.500 15.200H7.800A1.300 1.300 0 0 1 6.500 13.900Z"/></svg>
<svg class="abs" style="left:968.60px;top:296.90px" width="14" height="15" viewBox="0 0 14 15" preserveAspectRatio="none"><path fill="#dcdcd2" d="M4.600 0.500A1 1 0 0 1 5.500 0H8.500A1 1 0 0 1 9.400 0.500L9.800 1.100H12.800a0.900 0.900 0 0 1 0 1.800H1.200a0.900 0.900 0 0 1 0-1.800H4.200Z M1.500 3.800H12.500L11.800 13.600A1.500 1.500 0 0 1 10.300 15H3.700A1.500 1.500 0 0 1 2.200 13.600Z"/><path d="M4.600 5.600V12.800M7 5.600V12.800M9.400 5.600V12.800" stroke="#3c3c39" stroke-width="1" stroke-linecap="round"/></svg>
<svg class="abs" style="left:68.40px;top:340.70px" width="14" height="10" viewBox="0 0 14 10" preserveAspectRatio="none"><path d="M2.400 2.800L7 7.300L11.600 2.800" fill="none" stroke="#1a1a1a" stroke-width="2" stroke-linecap="round" stroke-linejoin="round"/></svg>
<svg class="abs" style="left:904.00px;top:338.00px" width="17" height="15" viewBox="0 0 17 15" preserveAspectRatio="none"><g fill="#dcdcd2" stroke="#dcdcd2" stroke-linejoin="round" stroke-linecap="round"><path d="M1.300 4.300H12" stroke-width="2.200" fill="none"/><path d="M11.800 0.900L15.900 4.300L11.800 7.700Z" stroke-width="1.200"/><path d="M15.700 10.700H5" stroke-width="2.200" fill="none"/><path d="M5.200 7.300L1.100 10.700L5.200 14.100Z" stroke-width="1.200"/></g></svg>
<svg class="abs" style="left:936.40px;top:337.80px" width="16" height="15.2" viewBox="0 0 16 15.2" preserveAspectRatio="none"><path fill="#dcdcd2" d="M1.500 0.900H3.300a1.800 1.500 0 0 1 3.400 0H8.500A1.500 1.500 0 0 1 10 2.400V11.700A1.500 1.500 0 0 1 8.500 13.200H1.500A1.500 1.500 0 0 1 0 11.700V2.400A1.500 1.500 0 0 1 1.500 0.900Z"/><circle cx="5" cy="1.500" r="0.700" fill="#161616"/><path fill="#161616" d="M5.400 4.300A1.700 1.700 0 0 1 7.100 2.600H12.300L16 6.200V15.200H5.400Z"/><path fill="#dcdcd2" d="M6.500 5A1.300 1.300 0 0 1 7.800 3.700H11.800L15.800 7.500V13.900A1.300 1.300 0 0 1 14.500 15.200H7.800A1.300 1.300 0 0 1 6.500 13.900Z"/></svg>
<svg class="abs" style="left:968.60px;top:337.90px" width="14" height="15" viewBox="0 0 14 15" preserveAspectRatio="none"><path fill="#dcdcd2" d="M4.600 0.500A1 1 0 0 1 5.500 0H8.500A1 1 0 0 1 9.400 0.500L9.800 1.100H12.800a0.900 0.900 0 0 1 0 1.800H1.200a0.900 0.900 0 0 1 0-1.800H4.200Z M1.500 3.800H12.500L11.800 13.600A1.500 1.500 0 0 1 10.300 15H3.700A1.500 1.500 0 0 1 2.200 13.600Z"/><path d="M4.600 5.600V12.800M7 5.600V12.800M9.400 5.600V12.800" stroke="#3c3c39" stroke-width="1" stroke-linecap="round"/></svg>
<svg class="abs" style="left:68.40px;top:381.70px" width="14" height="10" viewBox="0 0 14 10" preserveAspectRatio="none"><path d="M2.400 2.800L7 7.300L11.600 2.800" fill="none" stroke="#1a1a1a" stroke-width="2" stroke-linecap="round" stroke-linejoin="round"/></svg>
<svg class="abs" style="left:904.00px;top:379.00px" width="17" height="15" viewBox="0 0 17 15" preserveAspectRatio="none"><g fill="#dcdcd2" stroke="#dcdcd2" stroke-linejoin="round" stroke-linecap="round"><path d="M1.300 4.300H12" stroke-width="2.200" fill="none"/><path d="M11.800 0.900L15.900 4.300L11.800 7.700Z" stroke-width="1.200"/><path d="M15.700 10.700H5" stroke-width="2.200" fill="none"/><path d="M5.200 7.300L1.100 10.700L5.200 14.100Z" stroke-width="1.200"/></g></svg>
<svg class="abs" style="left:936.40px;top:378.80px" width="16" height="15.2" viewBox="0 0 16 15.2" preserveAspectRatio="none"><path fill="#dcdcd2" d="M1.500 0.900H3.300a1.800 1.500 0 0 1 3.400 0H8.500A1.500 1.500 0 0 1 10 2.400V11.700A1.500 1.500 0 0 1 8.500 13.200H1.500A1.500 1.500 0 0 1 0 11.700V2.400A1.500 1.500 0 0 1 1.500 0.900Z"/><circle cx="5" cy="1.500" r="0.700" fill="#161616"/><path fill="#161616" d="M5.400 4.300A1.700 1.700 0 0 1 7.100 2.600H12.300L16 6.200V15.200H5.400Z"/><path fill="#dcdcd2" d="M6.500 5A1.300 1.300 0 0 1 7.800 3.700H11.800L15.800 7.500V13.900A1.300 1.300 0 0 1 14.500 15.200H7.800A1.300 1.300 0 0 1 6.500 13.900Z"/></svg>
<svg class="abs" style="left:968.60px;top:378.90px" width="14" height="15" viewBox="0 0 14 15" preserveAspectRatio="none"><path fill="#dcdcd2" d="M4.600 0.500A1 1 0 0 1 5.500 0H8.500A1 1 0 0 1 9.400 0.500L9.800 1.100H12.800a0.900 0.900 0 0 1 0 1.800H1.200a0.900 0.900 0 0 1 0-1.800H4.200Z M1.500 3.800H12.500L11.800 13.600A1.500 1.500 0 0 1 10.300 15H3.700A1.500 1.500 0 0 1 2.200 13.600Z"/><path d="M4.600 5.600V12.800M7 5.600V12.800M9.400 5.600V12.800" stroke="#3c3c39" stroke-width="1" stroke-linecap="round"/></svg>
<svg class="abs" style="left:68.40px;top:422.70px" width="14" height="10" viewBox="0 0 14 10" preserveAspectRatio="none"><path d="M2.400 2.800L7 7.300L11.600 2.800" fill="none" stroke="#1a1a1a" stroke-width="2" stroke-linecap="round" stroke-linejoin="round"/></svg>
<svg class="abs" style="left:904.00px;top:420.00px" width="17" height="15" viewBox="0 0 17 15" preserveAspectRatio="none"><g fill="#dcdcd2" stroke="#dcdcd2" stroke-linejoin="round" stroke-linecap="round"><path d="M1.300 4.300H12" stroke-width="2.200" fill="none"/><path d="M11.800 0.900L15.900 4.300L11.800 7.700Z" stroke-width="1.200"/><path d="M15.700 10.700H5" stroke-width="2.200" fill="none"/><path d="M5.200 7.300L1.100 10.700L5.200 14.100Z" stroke-width="1.200"/></g></svg>
<svg class="abs" style="left:936.40px;top:419.80px" width="16" height="15.2" viewBox="0 0 16 15.2" preserveAspectRatio="none"><path fill="#dcdcd2" d="M1.500 0.900H3.300a1.800 1.500 0 0 1 3.400 0H8.500A1.500 1.500 0 0 1 10 2.400V11.700A1.500 1.500 0 0 1 8.500 13.200H1.500A1.500 1.500 0 0 1 0 11.700V2.400A1.500 1.500 0 0 1 1.500 0.900Z"/><circle cx="5" cy="1.500" r="0.700" fill="#161616"/><path fill="#161616" d="M5.400 4.300A1.700 1.700 0 0 1 7.100 2.600H12.300L16 6.200V15.200H5.400Z"/><path fill="#dcdcd2" d="M6.500 5A1.300 1.300 0 0 1 7.800 3.700H11.800L15.800 7.500V13.900A1.300 1.300 0 0 1 14.500 15.200H7.800A1.300 1.300 0 0 1 6.500 13.900Z"/></svg>
<svg class="abs" style="left:968.60px;top:419.90px" width="14" height="15" viewBox="0 0 14 15" preserveAspectRatio="none"><path fill="#dcdcd2" d="M4.600 0.500A1 1 0 0 1 5.500 0H8.500A1 1 0 0 1 9.400 0.500L9.800 1.100H12.800a0.900 0.900 0 0 1 0 1.800H1.200a0.900 0.900 0 0 1 0-1.800H4.200Z M1.500 3.800H12.500L11.800 13.600A1.500 1.500 0 0 1 10.300 15H3.700A1.500 1.500 0 0 1 2.200 13.600Z"/><path d="M4.600 5.600V12.800M7 5.600V12.800M9.400 5.600V12.800" stroke="#3c3c39" stroke-width="1" stroke-linecap="round"/></svg>
<svg class="abs" style="left:68.40px;top:463.70px" width="14" height="10" viewBox="0 0 14 10" preserveAspectRatio="none"><path d="M2.400 2.800L7 7.300L11.600 2.800" fill="none" stroke="#1a1a1a" stroke-width="2" stroke-linecap="round" stroke-linejoin="round"/></svg>
<svg class="abs" style="left:904.00px;top:461.00px" width="17" height="15" viewBox="0 0 17 15" preserveAspectRatio="none"><g fill="#dcdcd2" stroke="#dcdcd2" stroke-linejoin="round" stroke-linecap="round"><path d="M1.300 4.300H12" stroke-width="2.200" fill="none"/><path d="M11.800 0.900L15.900 4.300L11.800 7.700Z" stroke-width="1.200"/><path d="M15.700 10.700H5" stroke-width="2.200" fill="none"/><path d="M5.200 7.300L1.100 10.700L5.200 14.100Z" stroke-width="1.200"/></g></svg>
<svg class="abs" style="left:936.40px;top:460.80px" width="16" height="15.2" viewBox="0 0 16 15.2" preserveAspectRatio="none"><path fill="#dcdcd2" d="M1.500 0.900H3.300a1.800 1.500 0 0 1 3.400 0H8.500A1.500 1.500 0 0 1 10 2.400V11.700A1.500 1.500 0 0 1 8.500 13.200H1.500A1.500 1.500 0 0 1 0 11.700V2.400A1.500 1.500 0 0 1 1.500 0.900Z"/><circle cx="5" cy="1.500" r="0.700" fill="#161616"/><path fill="#161616" d="M5.400 4.300A1.700 1.700 0 0 1 7.100 2.600H12.300L16 6.200V15.200H5.400Z"/><path fill="#dcdcd2" d="M6.500 5A1.300 1.300 0 0 1 7.800 3.700H11.800L15.800 7.500V13.900A1.300 1.300 0 0 1 14.500 15.200H7.800A1.300 1.300 0 0 1 6.500 13.900Z"/></svg>
<svg class="abs" style="left:968.60px;top:460.90px" width="14" height="15" viewBox="0 0 14 15" preserveAspectRatio="none"><path fill="#dcdcd2" d="M4.600 0.500A1 1 0 0 1 5.500 0H8.500A1 1 0 0 1 9.400 0.500L9.800 1.100H12.800a0.900 0.900 0 0 1 0 1.800H1.200a0.900 0.900 0 0 1 0-1.800H4.200Z M1.500 3.800H12.500L11.800 13.600A1.500 1.500 0 0 1 10.300 15H3.700A1.500 1.500 0 0 1 2.200 13.600Z"/><path d="M4.600 5.600V12.800M7 5.600V12.800M9.400 5.600V12.800" stroke="#3c3c39" stroke-width="1" stroke-linecap="round"/></svg>
<svg class="abs" style="left:68.40px;top:504.70px" width="14" height="10" viewBox="0 0 14 10" preserveAspectRatio="none"><path d="M2.400 2.800L7 7.300L11.600 2.800" fill="none" stroke="#1a1a1a" stroke-width="2" stroke-linecap="round" stroke-linejoin="round"/></svg>
<svg class="abs" style="left:904.00px;top:502.00px" width="17" height="15" viewBox="0 0 17 15" preserveAspectRatio="none"><g fill="#dcdcd2" stroke="#dcdcd2" stroke-linejoin="round" stroke-linecap="round"><path d="M1.300 4.300H12" stroke-width="2.200" fill="none"/><path d="M11.800 0.900L15.900 4.300L11.800 7.700Z" stroke-width="1.200"/><path d="M15.700 10.700H5" stroke-width="2.200" fill="none"/><path d="M5.200 7.300L1.100 10.700L5.200 14.100Z" stroke-width="1.200"/></g></svg>
<svg class="abs" style="left:936.40px;top:501.80px" width="16" height="15.2" viewBox="0 0 16 15.2" preserveAspectRatio="none"><path fill="#dcdcd2" d="M1.500 0.900H3.300a1.800 1.500 0 0 1 3.400 0H8.500A1.500 1.500 0 0 1 10 2.400V11.700A1.500 1.500 0 0 1 8.500 13.200H1.500A1.500 1.500 0 0 1 0 11.700V2.400A1.500 1.500 0 0 1 1.500 0.900Z"/><circle cx="5" cy="1.500" r="0.700" fill="#161616"/><path fill="#161616" d="M5.400 4.300A1.700 1.700 0 0 1 7.100 2.600H12.300L16 6.200V15.200H5.400Z"/><path fill="#dcdcd2" d="M6.500 5A1.300 1.300 0 0 1 7.800 3.700H11.800L15.800 7.500V13.900A1.300 1.300 0 0 1 14.500 15.200H7.800A1.300 1.300 0 0 1 6.500 13.900Z"/></svg>
<svg class="abs" style="left:968.60px;top:501.90px" width="14" height="15" viewBox="0 0 14 15" preserveAspectRatio="none"><path fill="#dcdcd2" d="M4.600 0.500A1 1 0 0 1 5.500 0H8.500A1 1 0 0 1 9.400 0.500L9.800 1.100H12.800a0.900 0.900 0 0 1 0 1.800H1.200a0.900 0.900 0 0 1 0-1.800H4.200Z M1.500 3.800H12.500L11.800 13.600A1.500 1.500 0 0 1 10.300 15H3.700A1.500 1.500 0 0 1 2.200 13.600Z"/><path d="M4.600 5.600V12.800M7 5.600V12.800M9.400 5.600V12.800" stroke="#3c3c39" stroke-width="1" stroke-linecap="round"/></svg>
</body>
</html>
